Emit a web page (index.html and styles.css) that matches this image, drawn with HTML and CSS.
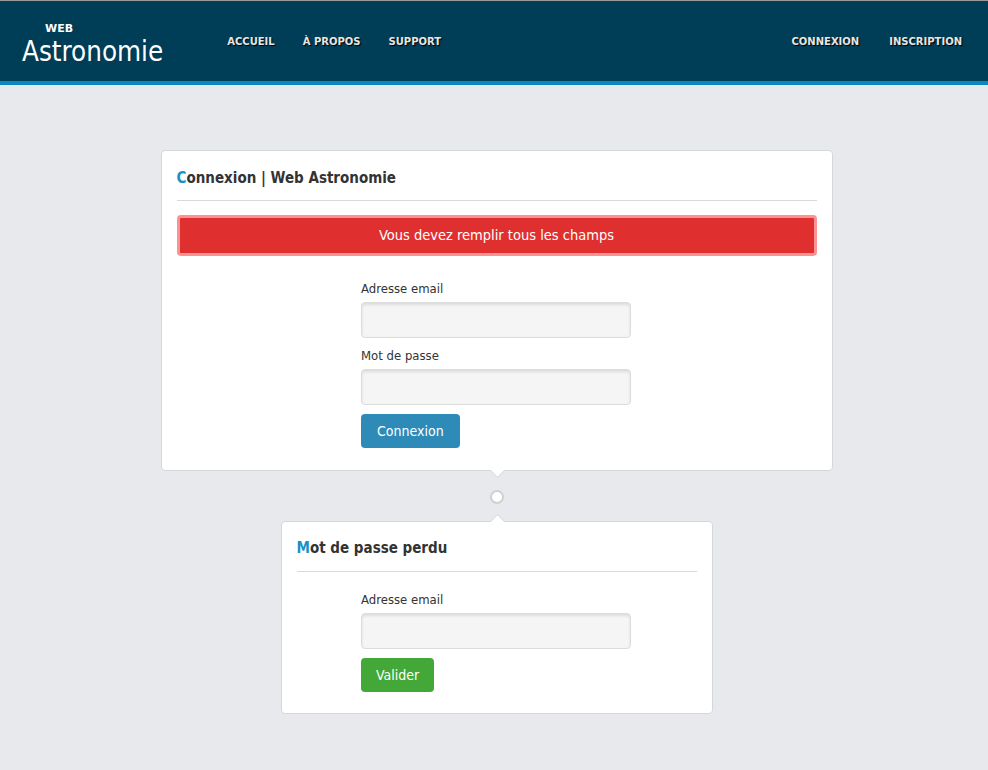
FILE: index.html
```html
<!DOCTYPE html>
<html lang="fr">
<head>
    <meta charset="UTF-8">
    <title>Connexion | Web Astronomie</title>
    <link rel="stylesheet" href="styles.css">
</head>
<body>
    <header class="header">
        <a href="#" class="logo">
            <span class="logo-small">WEB</span>
            <span class="logo-big">Astronomie</span>
        </a>
        <nav class="nav">
            <a href="#">ACCUEIL</a>
            <a href="#">À PROPOS</a>
            <a href="#">SUPPORT</a>
        </nav>
        <nav class="nav nav-right">
            <a href="#">CONNEXION</a>
            <a href="#">INSCRIPTION</a>
        </nav>
    </header>

    <main class="main">
        <div class="card card-login">
            <h2 class="card-title"><span class="first">C</span>onnexion | Web Astronomie</h2>
            <div class="alert">Vous devez remplir tous les champs</div>
            <form class="form">
                <label for="email">Adresse email</label>
                <input type="text" id="email">
                <label for="password">Mot de passe</label>
                <input type="password" id="password">
                <button type="button" class="btn btn-blue">Connexion</button>
            </form>
        </div>

        <div class="link-dot"></div>

        <div class="card card-lost">
            <h2 class="card-title"><span class="first">M</span>ot de passe perdu</h2>
            <form class="form form-lost">
                <label for="lost-email">Adresse email</label>
                <input type="text" id="lost-email">
                <button type="button" class="btn btn-green">Valider</button>
            </form>
        </div>
    </main>
</body>
</html>
```

FILE: styles.css
```css
body {
    margin: 0;
    background: #e8e9ed;
    font-family: "DejaVu Sans Condensed", "DejaVu Sans", sans-serif;
    font-size: 13px;
    color: #333;
}
.header {
    display: flex;
    align-items: center;
    height: 80px;
    padding: 0 26px 0 22px;
    background: #003d56;
    border-top: 1px solid #9a9a9a;
    border-bottom: 4px solid #0b87c0;
}
.logo {
    display: flex;
    flex-direction: column;
    color: #fff;
    text-decoration: none;
    margin-top: 5px;
}
.logo-small {
    font-family: "DejaVu Sans", sans-serif;
    font-weight: bold;
    font-size: 11px;
    margin-left: 23px;
    line-height: 14px;
}
.logo-big {
    font-size: 27.5px;
    line-height: 30px;
}
.nav {
    display: flex;
    gap: 28px;
    margin-left: 64px;
}
.nav-right {
    margin-left: auto;
    gap: 30px;
}
.nav a {
    font-family: "DejaVu Sans", sans-serif;
    font-weight: bold;
    font-size: 10px;
    color: #e6e6e6;
    text-decoration: none;
    text-shadow: 1px 1px 1px #000;
}
.main {
    display: flex;
    flex-direction: column;
    align-items: center;
    padding: 65px 0 40px 5px;
}
.card {
    position: relative;
    background: #fff;
    border: 1px solid #d6d7da;
    border-radius: 4px;
    padding: 0 15px 22px;
    box-sizing: border-box;
}
.card-login {
    width: 672px;
}
.card-lost {
    width: 432px;
    padding-bottom: 21px;
}
.card-login::after,
.card-lost::before {
    content: "";
    position: absolute;
    left: 50%;
    width: 10px;
    height: 10px;
    margin-left: -5px;
    background: #fff;
    border: 1px solid #d6d7da;
    transform: rotate(45deg);
}
.card-login::after {
    bottom: -6px;
    border-top: none;
    border-left: none;
}
.card-lost::before {
    top: -6px;
    border-bottom: none;
    border-right: none;
}
.card-title {
    margin: 0 0 14px;
    padding: 18px 0 12px;
    border-bottom: 1px solid #d9d9d9;
    font-size: 15px;
    font-weight: bold;
    color: #333;
    line-height: 19px;
}
.card-lost .card-title {
    padding: 17px 0 13px;
}
.first {
    color: #1a8fc8;
}
.alert {
    background: #e02f2f;
    border: 3px solid #fe9191;
    border-radius: 4px;
    color: #fff;
    font-size: 14.5px;
    text-align: center;
    padding: 7px 0 8px;
    line-height: 20px;
    margin-bottom: 24px;
}
.form {
    width: 270px;
    margin: 0 auto;
    padding-right: 1px;
    display: flex;
    flex-direction: column;
    align-items: flex-start;
}
.form-lost {
    margin-top: 19px;
}
.form label {
    font-size: 13px;
    line-height: 18px;
    margin-bottom: 4px;
}
.form input {
    width: 100%;
    height: 36px;
    box-sizing: border-box;
    background: #f5f5f5;
    border: 1px solid #dcdcdc;
    border-radius: 4px;
    box-shadow: inset 0 2px 3px rgba(0,0,0,0.1);
    margin-bottom: 9px;
}
.btn {
    border: none;
    border-radius: 4px;
    color: #fff;
    font-family: inherit;
    font-size: 14px;
    height: 34px;
    padding: 0 16px;
    cursor: pointer;
}
.btn-blue {
    background: #2e8bb8;
}
.btn-green {
    background: #43a838;
    padding: 0 15px;
}
.link-dot {
    width: 10px;
    height: 10px;
    margin: 19px 0 17px;
    background: #fff;
    border: 2px solid #d0d0d0;
    border-radius: 50%;
}
```
